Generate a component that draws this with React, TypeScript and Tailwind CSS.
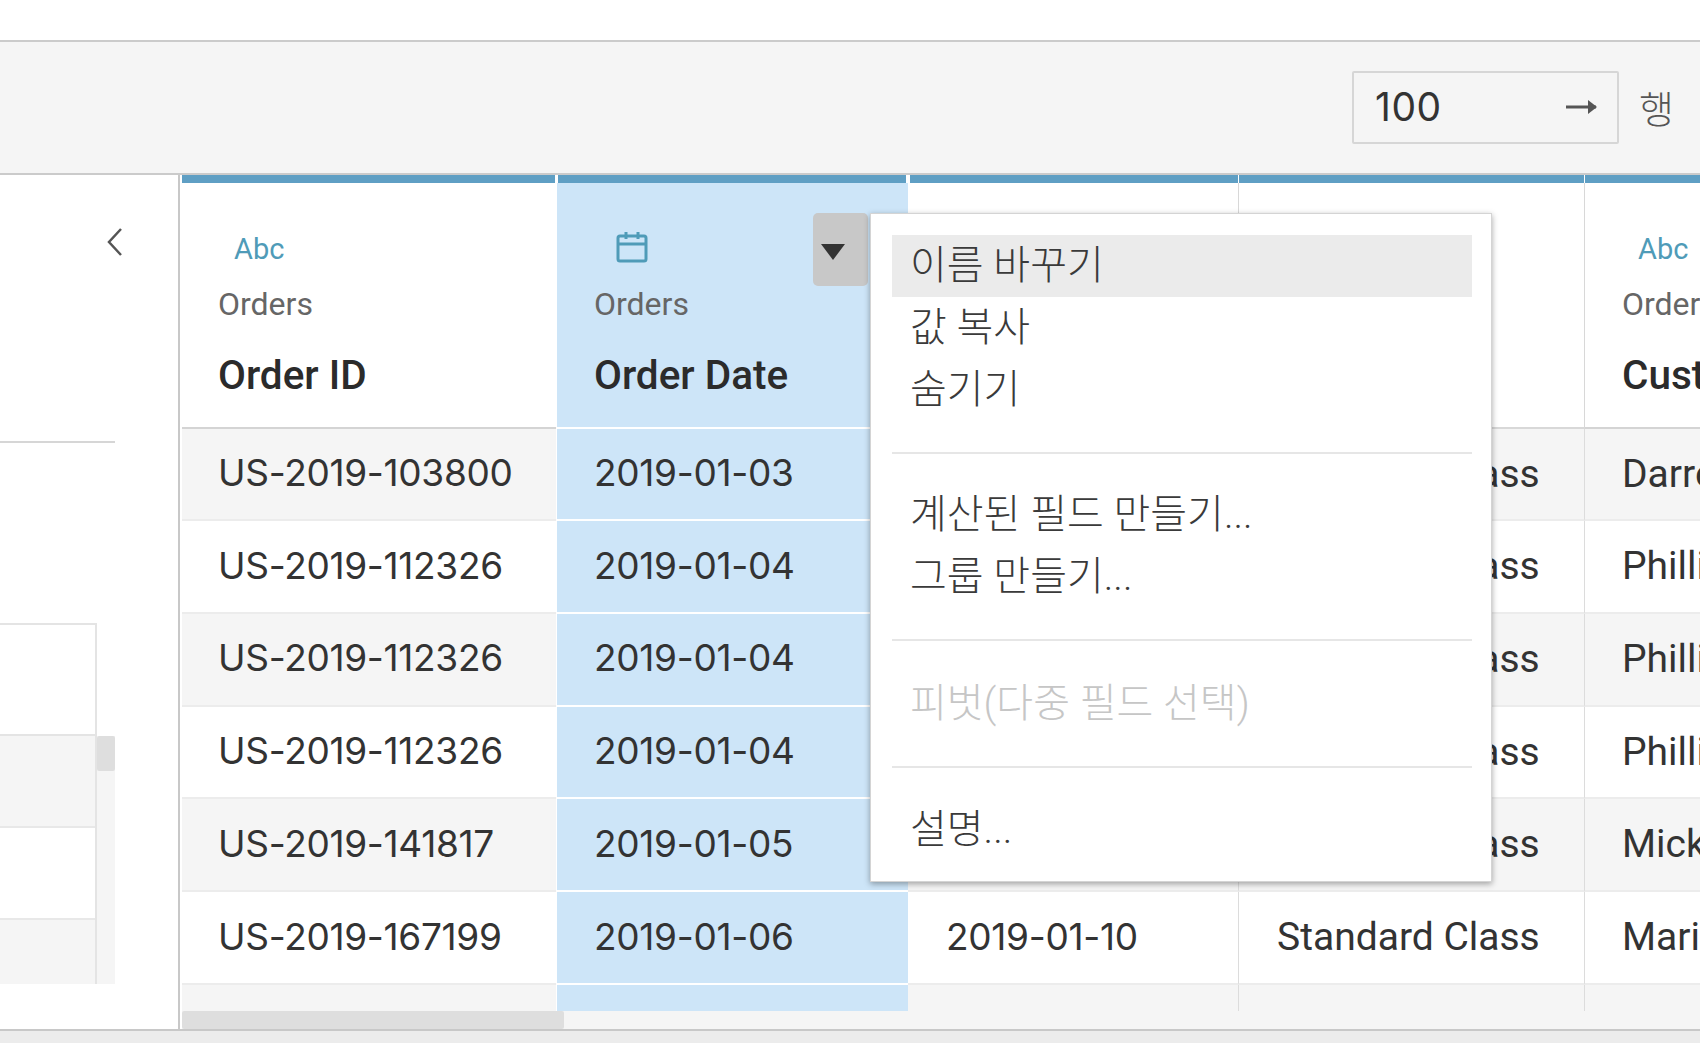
import { ReactNode } from 'react';

const rows = [
  { id: 'US-2019-103800', order: '2019-01-03', ship: '2019-01-07', mode: 'Standard Class', name: 'Darren Powers' },
  { id: 'US-2019-112326', order: '2019-01-04', ship: '2019-01-08', mode: 'Standard Class', name: 'Phillina Ober' },
  { id: 'US-2019-112326', order: '2019-01-04', ship: '2019-01-08', mode: 'Standard Class', name: 'Phillina Ober' },
  { id: 'US-2019-112326', order: '2019-01-04', ship: '2019-01-08', mode: 'Standard Class', name: 'Phillina Ober' },
  { id: 'US-2019-141817', order: '2019-01-05', ship: '2019-01-12', mode: 'Standard Class', name: 'Mick Brown' },
  { id: 'US-2019-167199', order: '2019-01-06', ship: '2019-01-10', mode: 'Standard Class', name: 'Maria Etezadi' },
];

const gridCols = 'grid grid-cols-[375px_351px_331px_346px_115px]';
const numeric = "font-['Inter'] text-[37px] tracking-[-0.3px] text-[#333333] mb-[2px]";

function CalendarIcon() {
  return (
    <svg width="32" height="32" viewBox="0 0 32 32" fill="none" stroke="#4f9bb8" strokeWidth="3" className="ml-[6px] mt-[-4px]">
      <rect x="2" y="5" width="28" height="25" rx="2" />
      <path d="M2 13h28M10 1v7M22 1v7" />
    </svg>
  );
}

function HeaderCell({ type, title, className }: { type: 'abc' | 'date'; title: string; className: string }) {
  return (
    <div className={`h-[245.5px] pt-[49px] overflow-hidden whitespace-nowrap ${className}`}>
      <div className="h-[34px] pl-[16px] flex items-center text-[29px] leading-none text-[#4f9bb8]">
        {type === 'abc' ? 'Abc' : <CalendarIcon />}
      </div>
      <div className="mt-[20px] h-[36px] leading-[36px] text-[32px] text-[#666666]">Orders</div>
      <div className="mt-[30px] h-[46px] leading-[46px] text-[40.5px] font-medium text-[#2b2b2b]">{title}</div>
    </div>
  );
}

function DataCell({ children, className }: { children?: ReactNode; className: string }) {
  return (
    <div className={`flex items-center overflow-hidden whitespace-nowrap text-[39px] text-[#333333] ${className}`}>
      {children}
    </div>
  );
}

function TopBar({ className }: { className: string }) {
  return <div className={`h-[8px] bg-[#5f9fc4] ${className}`} />;
}

function MenuItem({ label, active, disabled }: { label: string; active?: boolean; disabled?: boolean }) {
  return (
    <div
      className={`h-[62px] pl-[18px] flex items-center text-[40px] font-light ${active ? 'bg-[#ebebeb]' : ''} ${disabled ? 'text-[#c6c6c6]' : 'text-[#3a3a3a]'}`}
    >
      {label}
    </div>
  );
}

export default function App() {
  return (
    <div className="relative w-[1700px] h-[1043px] overflow-hidden bg-white flex flex-col font-['Roboto','Noto_Sans_CJK_KR',sans-serif]">
      {/* Top blank strip */}
      <div className="h-[40px] bg-white" />

      {/* Toolbar */}
      <div className="h-[135px] bg-[#f5f5f5] border-y-2 border-[#cbcbcb] flex items-center justify-end">
        <div className="w-[267px] h-[73px] pl-[21px] pr-[18px] border-2 border-[#d6d6d6] rounded-[2px] flex items-center justify-between mt-[-1px]">
          <span className="font-['Inter'] text-[39px] tracking-[0.5px] text-[#333333]">100</span>
          <svg width="33" height="18" viewBox="0 0 33 18" fill="none" stroke="#555555" strokeWidth="3">
            <path d="M0 9h30" />
            <path d="M22 2l9 7-9 7" fill="#555555" stroke="none" />
          </svg>
        </div>
        <span className="ml-[20px] mr-[26px] mt-[6px] text-[38px] font-light text-[#555555]">행</span>
      </div>

      {/* Main */}
      <div className="flex-1 flex min-h-0">
        {/* Left panel */}
        <div className="w-[180px] shrink-0 border-r-2 border-[#c8c8c8] flex flex-col">
          <div className="pt-[52px] pl-[105px]">
            <svg width="18" height="30" viewBox="0 0 18 30" fill="none" stroke="#555555" strokeWidth="2.5">
              <path d="M16 2L4 15l12 13" />
            </svg>
          </div>
          <div className="mt-[184px] w-[115px] h-[2px] bg-[#d6d6d6]" />
          <div className="mt-[180px] w-[115px] flex">
            <div className="w-[97px] border-t-2 border-r-2 border-[#e4e4e4]">
              <div className="h-[111px] border-b-2 border-[#e4e4e4]" />
              <div className="h-[92px] bg-[#f5f5f5] border-b-2 border-[#e8e8e8]" />
              <div className="h-[92px] border-b-2 border-[#e8e8e8]" />
              <div className="h-[64px] bg-[#f5f5f5]" />
            </div>
            <div className="w-[18px] flex flex-col">
              <div className="h-[113px]" />
              <div className="flex-1 bg-[#f5f5f5]">
                <div className="h-[35px] bg-[#dedede] rounded-[2px]" />
              </div>
            </div>
          </div>
        </div>

        {/* Table */}
        <div className="flex-1 min-w-0 pl-[2px] flex flex-col overflow-hidden">
          <div className={`h-[836px] ${gridCols}`}>
            <TopBar className="mr-[2px]" />
            <TopBar className="ml-[1px] mr-[2px]" />
            <TopBar className="ml-[2px] mr-[1px]" />
            <TopBar className="mr-[1px]" />
            <TopBar className="" />

            <HeaderCell type="abc" title="Order ID" className="pl-[36px] border-b-2 border-[#d4d4d4] mr-[1px]" />
            <HeaderCell type="date" title="Order Date" className="pl-[37px] bg-[#cde5f8] border-b-2 border-white" />
            <HeaderCell type="date" title="Ship Date" className="pl-[38px] border-b-2 border-r border-[#d8d8d8]" />
            <HeaderCell type="abc" title="Ship Mode" className="pl-[38px] border-b-2 border-r border-[#d8d8d8]" />
            <HeaderCell type="abc" title="Customer Name" className="pl-[37px] border-b-2 border-[#d4d4d4]" />

            {rows.map((row, i) => {
              const stripe = i % 2 === 0 ? 'bg-[#f5f5f5]' : 'bg-white';
              const base = 'h-[92.7px] border-b-2 border-[#ececec]';
              return [
                <DataCell key={`${i}-id`} className={`pl-[36px] ${base} ${stripe} mr-[1px]`}><span className={numeric}>{row.id}</span></DataCell>,
                <DataCell key={`${i}-order`} className="pl-[37px] h-[92.7px] border-b-2 border-white bg-[#cde5f8]"><span className={numeric}>{row.order}</span></DataCell>,
                <DataCell key={`${i}-ship`} className={`pl-[38px] ${base} ${stripe} border-r border-r-[#dcdcdc]`}><span className={numeric}>{row.ship}</span></DataCell>,
                <DataCell key={`${i}-mode`} className={`pl-[38px] ${base} ${stripe} border-r border-r-[#dcdcdc]`}>{row.mode}</DataCell>,
                <DataCell key={`${i}-name`} className={`pl-[37px] ${base} ${stripe}`}>{row.name}</DataCell>,
              ];
            })}

            <DataCell className="h-[26.3px] bg-[#f5f5f5] mr-[1px]" />
            <DataCell className="h-[26.3px] bg-[#cde5f8]" />
            <DataCell className="h-[26.3px] bg-[#f5f5f5] border-r border-[#dcdcdc]" />
            <DataCell className="h-[26.3px] bg-[#f5f5f5] border-r border-[#dcdcdc]" />
            <DataCell className="h-[26.3px] bg-[#f5f5f5]" />
          </div>

          {/* Horizontal scrollbar */}
          <div className="flex-1 bg-[#f5f5f5]">
            <div className="w-[382px] h-full bg-[#dedede] rounded-[2px]" />
          </div>
        </div>
      </div>

      {/* Bottom strip */}
      <div className="h-[14px] bg-[#ececec] border-t-2 border-[#c8c8c8]" />

      {/* Column dropdown button */}
      <div className="absolute left-[813px] top-[213px] w-[55px] h-[73px] bg-[#c8c8c8] rounded-[5px] flex items-center justify-center">
        <svg width="24" height="16" viewBox="0 0 24 16" className="mt-[4px] ml-[-16px]">
          <path d="M0 0h24L12 16z" fill="#333333" />
        </svg>
      </div>

      {/* Context menu */}
      <div className="absolute left-[870px] top-[213px] w-[622px] h-[669px] bg-white border border-[#d4d4d4] shadow-[0_2px_6px_rgba(0,0,0,0.35)] pl-[21px] pr-[19px] pt-[21px]">
        <MenuItem label="이름 바꾸기" active />
        <MenuItem label="값 복사" />
        <MenuItem label="숨기기" />
        <div className="mt-[31px] h-[2px] bg-[#e6e6e6]" />
        <div className="mt-[30px]">
          <MenuItem label="계산된 필드 만들기..." />
          <MenuItem label="그룹 만들기..." />
        </div>
        <div className="mt-[31px] h-[2px] bg-[#e6e6e6]" />
        <div className="mt-[32px]">
          <MenuItem label="피벗(다중 필드 선택)" disabled />
        </div>
        <div className="mt-[31px] h-[2px] bg-[#e6e6e6]" />
        <div className="mt-[31px]">
          <MenuItem label="설명..." />
        </div>
      </div>
    </div>
  );
}
